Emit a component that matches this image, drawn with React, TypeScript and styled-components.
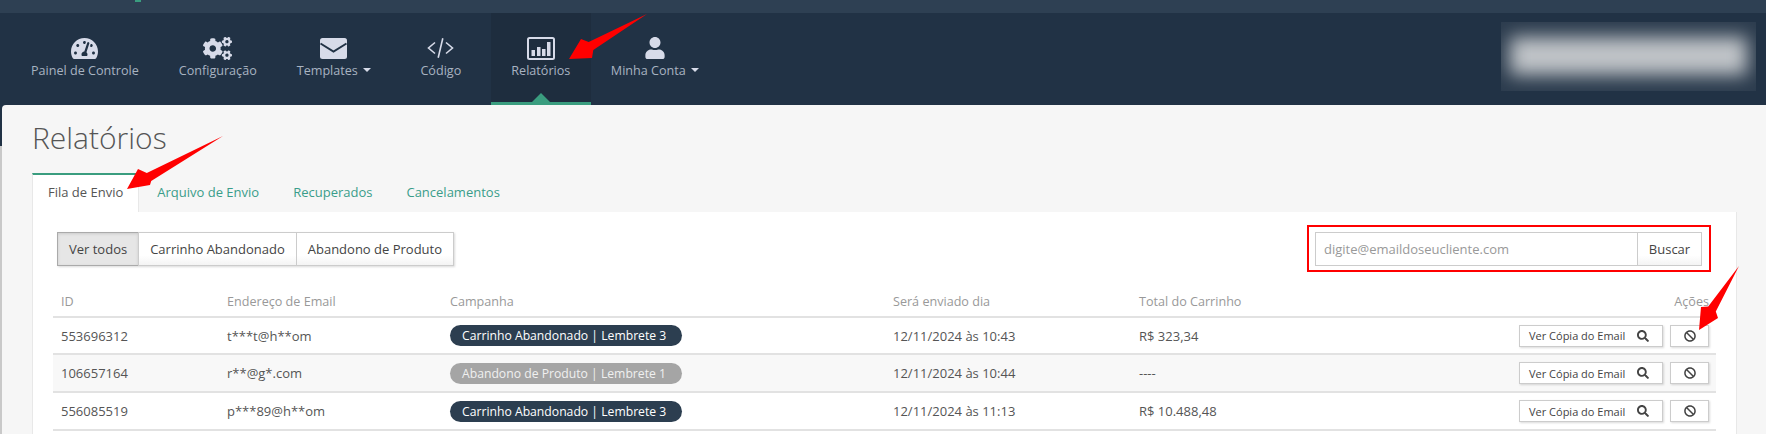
import * as React from 'react';
import styled, { createGlobalStyle } from 'styled-components';
import { FaBan, FaCogs, FaSearch, FaTachometerAlt, FaUser } from 'react-icons/fa';

const rows = [
  { id: '553696312', email: 't***t@h**om', campaign: 'Carrinho Abandonado | Lembrete 3', date: '12/11/2024 às 10:43', total: 'R$ 323,34', muted: false },
  { id: '106657164', email: 'r**@g*.com', campaign: 'Abandono de Produto | Lembrete 1', date: '12/11/2024 às 10:44', total: '----', muted: true },
  { id: '556085519', email: 'p***89@h**om', campaign: 'Carrinho Abandonado | Lembrete 3', date: '12/11/2024 às 11:13', total: 'R$ 10.488,48', muted: false },
];

const App = () => {
  return (
    <Page>
      <GlobalStyle />
      <TopStrip>
        <TopMark />
      </TopStrip>
      <Nav>
        <NavItem>
          <IconSlot><FaTachometerAlt size={27} /></IconSlot>
          <NavLabel>Painel de Controle</NavLabel>
        </NavItem>
        <NavItem>
          <IconSlot><FaCogs size={29} /></IconSlot>
          <NavLabel>Configuração</NavLabel>
        </NavItem>
        <NavItem>
          <IconSlot>
            <svg width="27" height="21" viewBox="0 0 27 21">
              <rect width="27" height="21" rx="2.5" fill="currentColor" />
              <path d="M0.5 5.5 L13.5 13.5 L26.5 5.5" fill="none" stroke="#213245" strokeWidth="2" />
            </svg>
          </IconSlot>
          <NavLabel>Templates<Caret /></NavLabel>
        </NavItem>
        <NavItem>
          <IconSlot>
            <svg width="27" height="20" viewBox="0 0 27 20" fill="none" stroke="currentColor" strokeWidth="1.6">
              <path d="M8 4.5 L1.5 10 L8 15.5" />
              <path d="M19 4.5 L25.5 10 L19 15.5" />
              <path d="M15.8 0.3 L11.2 19.7" />
            </svg>
          </IconSlot>
          <NavLabel>Código</NavLabel>
        </NavItem>
        <NavItem $active>
          <IconSlot>
            <svg width="28" height="23" viewBox="0 0 28 23">
              <rect x="1" y="1" width="26" height="21" rx="1.5" fill="none" stroke="currentColor" strokeWidth="2" />
              <rect x="4.5" y="13" width="3.5" height="6" fill="currentColor" />
              <rect x="10" y="10" width="3.5" height="9" fill="currentColor" />
              <rect x="15" y="12" width="3.5" height="7" fill="currentColor" />
              <rect x="20" y="5" width="3.5" height="14" fill="currentColor" />
            </svg>
          </IconSlot>
          <NavLabel>Relatórios</NavLabel>
        </NavItem>
        <NavItem>
          <IconSlot><FaUser size={22} /></IconSlot>
          <NavLabel>Minha Conta<Caret /></NavLabel>
        </NavItem>
        <BlurredAccount>
          <BlurredName />
        </BlurredAccount>
      </Nav>
      <Shell>
        <Main>
          <Title>Relatórios</Title>
          <Tabs>
            <Tab $active>Fila de Envio</Tab>
            <Tab>Arquivo de Envio</Tab>
            <Tab>Recuperados</Tab>
            <Tab>Cancelamentos</Tab>
          </Tabs>
          <TabPanel>
            <Toolbar>
              <FilterGroup>
                <FilterButton $active>Ver todos</FilterButton>
                <FilterButton>Carrinho Abandonado</FilterButton>
                <FilterButton>Abandono de Produto</FilterButton>
              </FilterGroup>
              <SearchHighlight>
                <SearchInput placeholder="digite@emaildoseucliente.com" />
                <SearchButton>Buscar</SearchButton>
              </SearchHighlight>
            </Toolbar>
            <Table>
              <colgroup>
                <col width="166" />
                <col width="223" />
                <col width="443" />
                <col width="246" />
                <col />
                <col width="300" />
              </colgroup>
              <thead>
                <tr>
                  <HeadCell>ID</HeadCell>
                  <HeadCell>Endereço de Email</HeadCell>
                  <HeadCell>Campanha</HeadCell>
                  <HeadCell>Será enviado dia</HeadCell>
                  <HeadCell>Total do Carrinho</HeadCell>
                  <HeadCell $right>Ações</HeadCell>
                </tr>
              </thead>
              <tbody>
                {rows.map((row) => (
                  <Row key={row.id} $striped={row.muted}>
                    <Cell>{row.id}</Cell>
                    <Cell>{row.email}</Cell>
                    <Cell><Pill $muted={row.muted}>{row.campaign}</Pill></Cell>
                    <Cell>{row.date}</Cell>
                    <Cell>{row.total}</Cell>
                    <ActionsCell>
                      <ActionButton>Ver Cópia do Email<FaSearch size={12} /></ActionButton>
                      <BanButton><FaBan size={12} /></BanButton>
                    </ActionsCell>
                  </Row>
                ))}
              </tbody>
            </Table>
          </TabPanel>
        </Main>
      </Shell>
      <Arrows width="1766" height="434" viewBox="0 0 1766 434">
        <polygon points="647,14 593.3,50 592,58 569,59 581,39 588.7,42" />
        <polygon points="223,136 151.2,180.9 150,185 127,189 138,169 146.8,173.1" />
        <polygon points="1739,266 1715.8,311.4 1718,318 1699,330 1701,307 1708.2,306.6" />
      </Arrows>
    </Page>
  );
};

export default App;

const GlobalStyle = createGlobalStyle`
  html, body {
    margin: 0;
    padding: 0;
    background: #f6f6f6;
  }
  * {
    box-sizing: border-box;
  }
`;

const Page = styled.div`
  position: relative;
  width: 1766px;
  height: 434px;
  overflow: hidden;
  font-family: 'Open Sans', sans-serif;
  font-size: 13px;
  color: #555;
`;

const TopStrip = styled.div`
  height: 13px;
  padding-left: 135px;
  background: #2e4053;
`;

const TopMark = styled.div`
  width: 6px;
  height: 2px;
  background: #3a9d7f;
`;

const Nav = styled.nav`
  display: flex;
  height: 92px;
  padding-left: 11px;
  background: #213245;
`;

const NavItem = styled.div<{ $active?: boolean }>`
  position: relative;
  display: flex;
  flex-direction: column;
  align-items: center;
  min-width: 100px;
  padding: 21px 20px 0;
  color: #d7dbe9;
  background: ${(p) => (p.$active ? '#1e2d3e' : 'transparent')};
  border-bottom: 3px solid ${(p) => (p.$active ? '#3a9d7f' : 'transparent')};
  &::after {
    content: '';
    display: ${(p) => (p.$active ? 'block' : 'none')};
    position: absolute;
    left: 50%;
    bottom: 0;
    margin-left: -9px;
    border: 9px solid transparent;
    border-top: 0;
    border-bottom-color: #3a9d7f;
  }
`;

const IconSlot = styled.div`
  display: flex;
  align-items: center;
  justify-content: center;
  height: 28px;
`;

const NavLabel = styled.div`
  display: flex;
  align-items: center;
  height: 18px;
  margin-top: -1px;
  font-size: 12.6px;
  color: #a8b3c1;
  white-space: nowrap;
`;

const Caret = styled.span`
  width: 0;
  height: 0;
  margin-left: 5px;
  border-left: 4px solid transparent;
  border-right: 4px solid transparent;
  border-top: 4px solid #d7dbe9;
`;

const BlurredAccount = styled.div`
  width: 255px;
  height: 69px;
  margin: 9px 10px 0 auto;
  padding: 15px 9px;
  overflow: hidden;
  background: #2c3c4e;
`;

const BlurredName = styled.div`
  height: 38px;
  background: #c0c4c8;
  filter: blur(9px);
`;

const Shell = styled.div`
  height: 329px;
  padding-left: 2px;
  background: linear-gradient(#213245 41px, #c9c9c9 41px);
`;

const Main = styled.main`
  height: 100%;
  padding: 0 29px 0 30px;
  background: #f6f6f6;
  border-top-left-radius: 4px;
`;

const Title = styled.h1`
  height: 68px;
  margin: 0;
  font-size: 30px;
  font-weight: 300;
  line-height: 66px;
  color: #555;
`;

const Tabs = styled.div`
  display: flex;
  height: 39px;
`;

const Tab = styled.div<{ $active?: boolean }>`
  padding: 0 15px 0 ${(p) => (p.$active ? '15px' : '17px')};
  line-height: 34px;
  color: ${(p) => (p.$active ? '#555' : '#3a9d8a')};
  white-space: nowrap;
  background: ${(p) => (p.$active ? '#fff' : 'transparent')};
  border-top: 2px solid ${(p) => (p.$active ? '#3a9d7f' : 'transparent')};
  border-left: 1px solid ${(p) => (p.$active ? '#e8e8e8' : 'transparent')};
  border-right: 1px solid ${(p) => (p.$active ? '#e8e8e8' : 'transparent')};
`;

const TabPanel = styled.section`
  height: 222px;
  padding: 13px 20px 0;
  background: #fff;
  border-left: 1px solid #e8e8e8;
  border-right: 1px solid #e8e8e8;
`;

const Toolbar = styled.div`
  display: flex;
  align-items: center;
  justify-content: space-between;
  height: 47px;
  padding: 0 5px 0 4px;
`;

const FilterGroup = styled.div`
  display: flex;
  height: 34px;
  box-shadow: 1px 1px 2px rgba(0, 0, 0, 0.15);
`;

const FilterButton = styled.button<{ $active?: boolean }>`
  padding: 0 11px;
  font: inherit;
  color: #444;
  white-space: nowrap;
  background: ${(p) => (p.$active ? '#e6e6e6' : 'linear-gradient(#fff 70%, #f4f4f4)')};
  border: 1px solid ${(p) => (p.$active ? '#aaa' : '#ccc')};
  box-shadow: ${(p) => (p.$active ? 'inset 0 1px 3px rgba(0, 0, 0, 0.12)' : 'none')};
  & + & {
    margin-left: -1px;
  }
`;

const SearchHighlight = styled.div`
  display: flex;
  width: 404px;
  height: 47px;
  padding: 5px 7px 4px 6px;
  border: 2px solid #f00;
`;

const SearchInput = styled.input`
  flex: 1;
  min-width: 0;
  padding: 0 8px;
  font: inherit;
  color: #555;
  background: #fff;
  border: 1px solid #ccc;
  border-right: 0;
  outline: none;
  &::placeholder {
    color: #999;
    opacity: 1;
  }
`;

const SearchButton = styled.button`
  width: 65px;
  padding: 0;
  font: inherit;
  color: #444;
  background: linear-gradient(#fff 70%, #f4f4f4);
  border: 1px solid #ccc;
`;

const Table = styled.table`
  width: 100%;
  table-layout: fixed;
  border-collapse: collapse;
  tbody tr:first-child td {
    height: 37px;
  }
`;

const HeadCell = styled.th<{ $right?: boolean }>`
  height: 45px;
  padding: 0 ${(p) => (p.$right ? '7px' : '8px')} 6px 8px;
  font-size: 12.6px;
  font-weight: 400;
  color: #999;
  text-align: ${(p) => (p.$right ? 'right' : 'left')};
  vertical-align: bottom;
  border-bottom: 2px solid #e2e2e2;
`;

const Row = styled.tr<{ $striped?: boolean }>`
  background: ${(p) => (p.$striped ? '#f8f8f8' : '#fff')};
`;

const Cell = styled.td`
  height: 38px;
  padding: 0 8px;
  color: #555;
  white-space: nowrap;
  border-bottom: 2px solid #e2e2e2;
`;

const ActionsCell = styled(Cell)`
  padding-right: 7px;
  text-align: right;
`;

const Pill = styled.span<{ $muted?: boolean }>`
  display: inline-block;
  width: 232px;
  height: 21px;
  padding: 0 12px;
  font-size: 12.2px;
  line-height: 21px;
  color: ${(p) => (p.$muted ? '#f0f0f0' : '#fff')};
  white-space: nowrap;
  background: ${(p) => (p.$muted ? '#a5a5a5' : '#2c3e50')};
  border-radius: 11px;
`;

const ActionButton = styled.button`
  display: inline-flex;
  align-items: center;
  justify-content: space-between;
  width: 144px;
  height: 22px;
  padding: 0 13px 0 9px;
  font-family: inherit;
  font-size: 11px;
  color: #444;
  vertical-align: middle;
  background: #fff;
  border: 1px solid #ccc;
  box-shadow: 1px 1px 2px rgba(0, 0, 0, 0.15);
`;

const BanButton = styled(ActionButton)`
  justify-content: center;
  width: 39px;
  margin-left: 7px;
  padding: 0;
`;

const Arrows = styled.svg`
  position: absolute;
  top: 0;
  left: 0;
  fill: #f00;
  pointer-events: none;
`;
